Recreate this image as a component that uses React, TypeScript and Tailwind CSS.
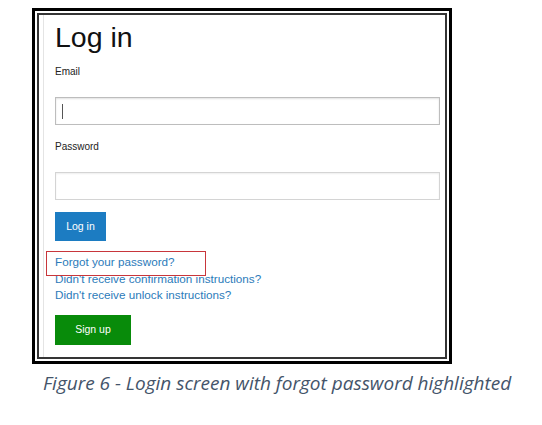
export default function App() {
  return (
    <div className="w-[542px] h-[425px] bg-white font-['Liberation_Sans',Arial,sans-serif]">
      <div className="pt-[8px] pl-[32px]">
        {/* double frame round the screenshot */}
        <div className="w-[420px] h-[356px] border-[3px] border-black p-[2px]">
          <div className="h-full border-2 border-[#353535] flex">
            <div className="w-[4px]" />
            <div className="flex-1 border-l border-[#e4e4e4] pl-[11px] pr-[5px] flex flex-col items-start">
              <h1 className="mt-[8px] text-[28.5px] leading-[28px] text-[#111]">Log in</h1>

              <label className="mt-[15px] text-[10px] leading-[12px] text-[#222]">Email</label>
              <div className="mt-[19px] w-full h-[28px] border border-[#bdbdbd] shadow-[inset_0_1px_2px_rgba(0,0,0,0.12)] flex items-center pl-[6px]">
                <div className="w-px h-[15px] bg-[#555]" />
              </div>

              <label className="mt-[16px] text-[10px] leading-[12px] text-[#222]">Password</label>
              <div className="mt-[19px] w-full h-[28px] border border-[#d4d4d4] shadow-[inset_0_1px_2px_rgba(0,0,0,0.07)]" />

              <button className="mt-[12px] h-[29px] w-[51px] bg-[#1c7cc2] text-white text-[10.5px]">
                Log in
              </button>

              <div className="mt-[13px] flex flex-col items-start text-[11.7px] leading-[16.5px] text-[#2b7bba]">
                <div className="relative">
                  <span>Forgot your password?</span>
                  <div className="absolute left-[-9px] top-[-3.5px] w-[160px] h-[25px] border border-[#c8363b]" />
                </div>
                <span>Didn't receive confirmation instructions?</span>
                <span>Didn't receive unlock instructions?</span>
              </div>

              <button className="mt-[11px] h-[30px] w-[76px] bg-[#088b0a] text-white text-[10.5px]">
                Sign up
              </button>
            </div>
          </div>
        </div>
      </div>

      <p className="mt-[7px] pl-[43px] italic text-[19px] leading-[24px] text-[#44546a] font-['Open_Sans',sans-serif]">
        Figure 6 - Login screen with forgot password highlighted
      </p>
    </div>
  );
}
